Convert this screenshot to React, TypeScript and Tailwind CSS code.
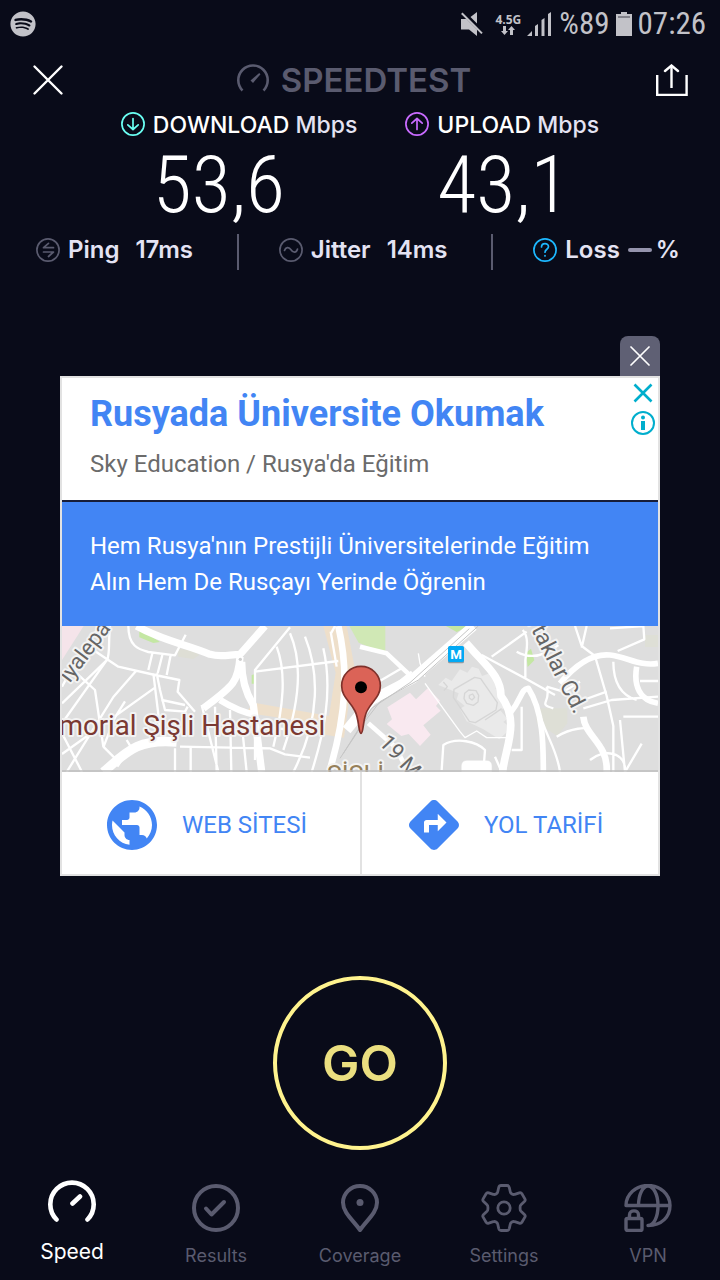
import type { ReactNode } from "react";
import { FaSpotify } from "react-icons/fa";
import { MdDirections, MdPublic } from "react-icons/md";

const condensed =
  "font-['Roboto_Condensed','Liberation_Sans_Narrow','Roboto',sans-serif]";

function StatusBar() {
  return (
    <div className="flex h-12 items-center justify-between pr-3.5 pl-2.5 text-[#c2c2c8]">
      <FaSpotify className="size-[26px]" aria-label="Spotify" />
      <div className="flex items-center gap-1.5">
        <svg viewBox="0 0 22 24" className="h-6 w-[22px]" fill="currentColor" aria-hidden="true">
          <path d="M9.500 5 16 0v11.500zM0 7h5.500L16 17.500V24l-8-6.500H0z" />
          <path d="M2.300 0 22 19.700" stroke="#090b19" strokeWidth="1.200" />
          <path d="M.8 1.200 21 21.400" stroke="currentColor" strokeWidth="2" />
        </svg>
        <div className="flex flex-col items-center pl-1.5 font-['Open_Sans',sans-serif] text-[12px] leading-3 font-bold">
          <span>4.5G</span>
          <svg viewBox="0 0 14 9" className="h-[9px] w-3.5" fill="currentColor" aria-hidden="true">
            <path d="M2 0h3v5h2L3.500 9 0 5h2zM9 9h3V4h2l-3.500-4L7 4h2z" />
          </svg>
        </div>
        <svg viewBox="0 0 24 24" className="size-6" fill="currentColor" aria-hidden="true">
          <path d="M0 24 5 19v5zM8 14l3-2v12H8zM14.500 8l3-2v18h-3zM21 2l3-2v24h-3z" />
        </svg>
        <span className={`${condensed} pl-0.5 text-[31px] leading-8`}>%89</span>
        <svg viewBox="0 0 16 24" className="h-6 w-4" aria-hidden="true">
          <path d="M5 0h6v2h5v22H0V2h5z" fill="currentColor" />
          <path d="M2 5h12" stroke="#6b6b76" strokeWidth="1.500" />
        </svg>
        <span className={`${condensed} text-[31px] leading-8`}>07:26</span>
      </div>
    </div>
  );
}

function Header() {
  return (
    <header className="flex h-16 items-center justify-between px-8">
      <button type="button" aria-label="Close" className="size-8">
        <svg viewBox="0 0 32 32" className="size-8" fill="none" stroke="#fff" strokeWidth="2.400" strokeLinecap="round">
          <path d="m2.500 2.500 27 27M29.500 2.500l-27 27" />
        </svg>
      </button>
      <div className="flex items-center gap-3 pr-3 text-[#5a5b6f]">
        <svg viewBox="0 0 32 32" className="size-8" fill="none" stroke="currentColor" aria-hidden="true">
          <path d="M5.500 26.500A14.700 14.700 0 1 1 26.500 26.500" strokeWidth="2.600" />
          <path d="m13.500 16.500 8.700-7.500 1.300 1.300-7.500 8.700z" fill="currentColor" stroke="none" />
        </svg>
        <span className="font-['Inter',sans-serif] text-[33px] leading-8 font-semibold">SPEEDTEST</span>
      </div>
      <button type="button" aria-label="Share" className="size-8">
        <svg viewBox="0 0 32 32" className="size-8" fill="none" stroke="#fff" strokeWidth="2.400">
          <path d="M1.200 11v20h29.400V11M15.500 24V1.500" />
          <path d="m9 7 6.500-5.500L22 7" strokeLinecap="round" />
        </svg>
      </button>
    </header>
  );
}

function Ring({ className, children }: { className: string; children: ReactNode }) {
  return (
    <svg viewBox="0 0 24 24" className={`size-6 shrink-0 ${className}`} fill="none" stroke="currentColor" strokeWidth="1.700" strokeLinecap="round" strokeLinejoin="round" aria-hidden="true">
      <circle cx="12" cy="12" r="11.100" />
      {children}
    </svg>
  );
}

function Throughput({ icon, label, value }: { icon: ReactNode; label: string; value: string }) {
  return (
    <div className="flex gap-2">
      {icon}
      <div>
        <p className="text-[23px] leading-[26px] font-medium text-white">
          {label} <span className="text-[#e4e3f3]">Mbps</span>
        </p>
        <p className={`${condensed} text-[80px] leading-[94px] font-light text-white`}>{value}</p>
      </div>
    </div>
  );
}

function Metric({ icon, label, children }: { icon: ReactNode; label: string; children: ReactNode }) {
  return (
    <div className="flex items-center gap-2 pr-1 pb-1 last:pr-0">
      {icon}
      <span>{label}</span>
      <span className="flex items-center">{children}</span>
    </div>
  );
}

function Results() {
  return (
    <section className="font-['Inter',sans-serif]">
      <div className="flex justify-center gap-12">
        <Throughput
          label="DOWNLOAD"
          value="53,6"
          icon={<Ring className="text-[#6afff3]"><path d="M12 6.500v11M6.800 12.800l5.200 4.700 5.200-4.700" /></Ring>}
        />
        <Throughput
          label="UPLOAD"
          value="43,1"
          icon={<Ring className="text-[#c96bff]"><path d="M12 17.500v-11M6.800 11.200 12 6.500l5.200 4.700" /></Ring>}
        />
      </div>
      <div className="mt-0.5 flex h-9 items-center justify-between pr-10 pl-9 text-[24px] font-semibold text-[#e4e3f3]">
        <Metric
          label="Ping"
          icon={<Ring className="text-[#5a5b6f]"><path d="M17.500 9.700H7.500L12.500 5.300M7.500 14h10l-5 4.500" /></Ring>}
        >
          <span className="pl-2">17ms</span>
        </Metric>
        <span className="h-9 w-0.5 bg-[#5a5b6f]" />
        <Metric
          label="Jitter"
          icon={<Ring className="text-[#5a5b6f]"><path d="M5.500 12.500c1-3.500 4.500-4 6.500-.8s5.500 3.400 6.500-.7" /></Ring>}
        >
          <span className="pl-2">14ms</span>
        </Metric>
        <span className="h-9 w-0.5 bg-[#5a5b6f]" />
        <Metric
          label="Loss"
          icon={<Ring className="text-[#1db8ff]"><path d="M8.500 9c0-4.500 7-4.500 7-.3 0 2.500-3.500 2.600-3.500 5.500M12 17.500v.4" /></Ring>}
        >
          <span className="mr-1 h-1 w-6 rounded-full bg-[#9594ad]" />%
        </Metric>
      </div>
    </section>
  );
}

function CityMap() {
  return (
    <svg viewBox="6 18 1788 438" preserveAspectRatio="xMidYMid slice" className="block h-[146px] w-full bg-[#dedede]" role="img" aria-label="Şişli">
      <rect x="6" y="18" width="1788" height="438" fill="#dedede" />
      <path d="M6 18h65L6 120z" fill="#f5e4ea" />
      <path d="M238 25 300 66l-20 3-42-17z" fill="#c4e7a3" />
      <path d="m350 85 50 8 18 12-18 12-45-7z" fill="#deded5" />
      <path d="M790 18h70l22 115-30 220-95-15 5-30-205-30 25-30 225 40 20-130z" fill="#eedfca" />
      <path d="M868 18h108v82l-80-32z" fill="#d0e8b5" />
      <path d="M1158 18h70l-38 18z" fill="#c4e7a3" />
      <path d="m575 165 8-2v28h-8zM1398 98l15-12 10 35-20 20z" fill="#c4e7a3" />
      <path d="m982 262 68-44 18 20 36-34 36 38-12 16 14 14-52 44 22 28-32 34-34-36-22 6-44-36 16-14z" fill="#f9e9f0" />
      <path d="M1430 265h92v45l-30 38-62-40zM1755 45h39v36h-39z" fill="#dedfd6" />
      <path d="m1135 195 22-22 18 10 25-35 22 10 14-18 20 6 10 22 28-10 22 34-10 14 14 4 18 52-18 8 22 26-12 10 24 18-36 34-48-30-50-24-20-38 14-8-24-20 6-18z" fill="#eaeaea" />
      <g fill="none" stroke="#d6d6d6" strokeWidth="4" strokeLinejoin="round">
        <path d="m1182 208 62-36 18 4 50 72-4 22-62 38-18-4-48-72z" />
        <path d="m1214 220 12-10 22 2 8 14-2 20-14 10-20-6-8-14zM1228 226l10-4 6 10-8 8-8-6z" />
        <path d="m1275 300 50-34M1150 186l12 14-10 12" />
      </g>
      <g fill="none" stroke="#fff" strokeLinejoin="round">
        <g strokeWidth="7">
          <path d="M150 18c-5 50 0 80-8 100L6 310M6 402l280-200M100 90l75 50 110 25 73 15-5 35 52 60M205 18c0 60 30 70 60 78l80 10 32-62M265 150l12-50M293 160l14-55M320 165l12-60M280 160l22 180M290 160l10 50 15 60 60 5 8-15M50 160l55 50 25 170 48 48M6 250l140-135M120 18 60 100 6 200M20 456l140-225 70-80M6 340l60 116M200 360l12 20-40 60M130 382l35-90 30-48" />
          <path d="M345 385v71M392 380v76M425 255l50 200M465 260l5 196M510 270l4 186M545 310l15 146M360 380l270 5 45 18 75 10M690 22 585 150v270M585 155l250-32M650 80c30 80 20 180-10 300M690 40c35 80 35 190-20 350M735 50c40 100 50 240-35 406M790 85c30 130 0 260-35 371M600 320l100 10M305 240l70 15" />
          <path d="M812 35 830 140M825 18l-12 22" />
          <path d="M930 200l95-55M925 260l130-105M1145 450l5-75c40-25 100-10 125 15l-5 65M1265 105l130 70 90 50M1295 110l105-75M1388 30c20 20 12 60 8 90v55M1370 95c35 20 75 20 125-20M1460 200c15 50-30 50 20 65M1460 200l50 15 50-30M1570 240l70-25" />
          <path d="m1545 18 20 60 40 30 35 120 20 90v138M1580 18l-15 65M1660 125c0 60 20 100 70 115M1570 265l85-25 139-10M1690 290h104M1430 250c20 90 60 130 70 206M1490 350c50-30 90-25 90-25M1680 300l15 156 50-85M1590 420c40-35 110-25 105 36M1355 390h30V260M1305 410l20 46M1650 25l100-7 3 40-80 35M1740 183h54" />
        </g>
        <path d="M1075 100l5 30 15 40M1095 190 1200 335l15 18 35-20 30 20h60" strokeWidth="4" />
        <path d="M230 18c80 45 150 55 220 85 35 10 60 0 90 0l75-85M540 110c-5 80-25 90-110 155M545 125c0 50 10 90 35 130l25 200" strokeWidth="22" />
        <path d="M130 456c70-60 100-100 220-90" strokeWidth="28" />
        <path d="M480 240c40 25 80 40 110 45M835 18c30 130 25 260-25 430" strokeWidth="20" />
        <path d="M860 330 935 240 1060 175 1240 18" strokeWidth="30" />
        <path d="m900 80 80 20 80 75M925 310l80 70 40 76" strokeWidth="14" />
        <path d="M1218 68c60 70 105 100 105 160 60 80 10 160 5 228" strokeWidth="23" />
        <path d="M1350 280c40-50 30-70 55-75 45 70 45 170 45 251M1500 190c50-60 100-90 150-85s90 35 144 25M1730 140c-10 60 10 100 64 110" strokeWidth="17" />
        <path d="M1570 290c5 60 75 80 70 166" strokeWidth="20" />
        <path d="M1205 456v-18q0-16 16-16h58q16 0 16 16v18z" fill="#fff" />
      </g>
      <path d="M1255 18 1075 180 960 245 910 310 840 415M1228 26 1050 188 935 265 850 400" fill="none" stroke="#c5c5c5" strokeWidth="3" />
      <circle cx="541" cy="118" r="5" fill="#cfcfcf" />
      <g className="font-['Roboto',sans-serif]" stroke="#f3f3f3" strokeWidth="12" strokeLinejoin="round" paintOrder="stroke">
        <text x="-14" y="180" fontSize="66" fill="#666" transform="rotate(-53 18 142)">iyalepa</text>
        <text x="-4" y="344" fontSize="83" fill="#7b3932">morial Şişli Hastanesi</text>
        <text x="800" y="492" fontSize="76" fill="#96805a">ŞİŞLİ</text>
        <text x="954" y="370" fontSize="66" fill="#666" transform="rotate(47 954 370)">19 Mayıs</text>
        <text x="1402" y="6" fontSize="68" fill="#666" transform="rotate(63 1402 6)">rtaklar Cd.</text>
      </g>
      <rect x="1164" y="80" width="48" height="50" rx="5" fill="#8c9aa3" />
      <rect x="1164" y="78" width="48" height="48" rx="5" fill="#03a9f4" />
      <text x="1188" y="117" textAnchor="middle" fontSize="40" fill="#fff" className="font-['Roboto',sans-serif] font-bold">M</text>
      <path d="M903 340c-8 0-5-42-18-67-15-30-40-42-40-76a58 58 0 0 1 116 0c0 34-25 46-40 76-13 25-10 67-18 67z" fill="#db6357" stroke="#7f312b" strokeWidth="5" />
      <circle cx="903" cy="202" r="18" />
      <path d="M6 453h1788" stroke="#bdbdbd" strokeWidth="5" />
    </svg>
  );
}

function AdCard() {
  return (
    <section className="mt-[66px] px-15 font-['Roboto',sans-serif]">
      <div className="flex justify-end">
        <button type="button" aria-label="Dismiss" className="flex size-10 items-center justify-center rounded-t-lg bg-[#5f6074]">
          <svg viewBox="0 0 20 20" className="size-5" fill="none" stroke="#fff" strokeWidth="1.700" strokeLinecap="round">
            <path d="m1 1 18 18M19 1 1 19" />
          </svg>
        </button>
      </div>
      <article className="border-2 border-[#e2e2e2] bg-white">
        <div className="flex justify-between border-b-2 border-[#171d38] pl-7">
          <div className="pt-3.5 pb-5">
            <h2 className="text-[36px] leading-11 font-bold text-[#4285f4]">Rusyada Üniversite Okumak</h2>
            <p className="mt-3 text-[24px] leading-8 text-[#6b6b6b]">Sky Education / Rusya'da Eğitim</p>
          </div>
          <div className="flex flex-col items-center gap-1.5 pt-[3px] pr-[3px] text-[#00aecd]">
            <button type="button" aria-label="Close ad" className="size-6">
              <svg viewBox="0 0 24 24" className="size-6" fill="none" stroke="currentColor" strokeWidth="2.600">
                <path d="m3.500 3.500 17 17M20.500 3.500l-17 17" />
              </svg>
            </button>
            <button type="button" aria-label="About this ad" className="size-6">
              <svg viewBox="0 0 24 24" className="size-6" fill="none" stroke="currentColor" strokeWidth="2">
                <circle cx="12" cy="12" r="11" />
                <circle cx="12" cy="6.500" r="2" fill="currentColor" stroke="none" />
                <path d="M12 10v9" strokeWidth="4" />
              </svg>
            </button>
          </div>
        </div>
        <p className="bg-[#4285f4] px-7 py-[26px] text-[24px] leading-9 text-white">
          Hem Rusya'nın Prestijli Üniversitelerinde Eğitim Alın Hem De Rusçayı Yerinde Öğrenin
        </p>
        <CityMap />
        <div className="grid grid-cols-2 text-[24px] text-[#4285f4]">
          <a href="#web" className="flex h-[102px] items-center gap-5 pt-1 pl-10">
            <MdPublic className="size-15 shrink-0" />
            <span>WEB SİTESİ</span>
          </a>
          <a href="#directions" className="flex h-[102px] items-center gap-5 border-l-2 border-[#e2e2e2] pt-1 pl-10.5">
            <MdDirections className="size-15 shrink-0" />
            <span>YOL TARİFİ</span>
          </a>
        </div>
      </article>
    </section>
  );
}

const tabs: { label: string; icon: ReactNode }[] = [
  {
    label: "Results",
    icon: (
      <>
        <circle cx="24" cy="24" r="22" />
        <path d="m14 24.500 5.500 6L32 18" />
      </>
    ),
  },
  {
    label: "Coverage",
    icon: (
      <>
        <path d="M24 46C17 36 7 28.500 7 18.500a17 16.500 0 0 1 34 0C41 28.500 31 36 24 46z" />
        <circle cx="24" cy="18.500" r="3.500" fill="currentColor" stroke="none" />
      </>
    ),
  },
  {
    label: "Settings",
    icon: (
      <g strokeWidth="2.800">
        <path d="M21 1.500h6c1.500 0 2 .8 2.300 2l1 4.500c.2 1 .8 1.500 1.700 2s1.700.7 2.700.3l4.600-1.500c1.100-.3 2-.1 2.600.9l3 5.200c.6 1 .3 1.900-.5 2.700L41 20.800c-.7.7-.9 1.300-.9 2.200v2c0 .9.200 1.500.9 2.200l3.400 3.200c.8.800 1.100 1.700.5 2.700l-3 5.200c-.6 1-1.500 1.200-2.600.9l-4.600-1.500c-1-.4-1.800-.2-2.700.3s-1.500 1-1.700 2l-1 4.500c-.3 1.200-.8 2-2.300 2h-6c-1.500 0-2-.8-2.300-2l-1-4.500c-.2-1-.8-1.500-1.700-2s-1.700-.7-2.700-.3l-4.600 1.500c-1.100.3-2 .1-2.600-.9l-3-5.200c-.6-1-.3-1.900.5-2.700L7 27.200c.7-.7.9-1.300.9-2.200v-2c0-.9-.2-1.500-.9-2.200l-3.400-3.200c-.8-.8-1.100-1.700-.5-2.700l3-5.200c.6-1 1.500-1.200 2.600-.9l4.600 1.500c1 .4 1.800.2 2.700-.3s1.500-1 1.700-2l1-4.500c.3-1.200.8-2 2.300-2z" />
        <circle cx="24" cy="24" r="6.200" />
      </g>
    ),
  },
  {
    label: "VPN",
    icon: (
      <g strokeWidth="3.400">
        <path d="M2 21.500a22 20 0 0 1 44 0c0 11-8 20-22 20M2 21.500h44M14.500 21.500C14.500 10 19 2 24 2s10 8 10 19.500-4 20-10 20" />
        <rect x="2" y="34.500" width="16" height="12" rx="1.500" />
        <path d="M5.500 34v-3c0-5.500 9-5.500 9 0v3" />
      </g>
    ),
  },
];

function TabBar() {
  return (
    <nav className="mt-auto grid h-[104px] grid-cols-5 font-['Inter',sans-serif] text-[18px] leading-5 text-[#5a5b6f]">
      <button type="button" aria-current="page" className="flex flex-col items-center gap-3 pt-1 text-[21px] leading-6 text-white">
        <svg viewBox="0 0 48 48" className="size-12" fill="none" stroke="currentColor" strokeWidth="4.600" strokeLinecap="round" aria-hidden="true">
          <path d="M8.500 39.500A21.700 21.700 0 1 1 39.500 39.500M24.500 23.500l7.500-7" />
        </svg>
        Speed
      </button>
      {tabs.map((tab) => (
        <button key={tab.label} type="button" className="flex flex-col items-center gap-3.5 pt-2">
          <svg viewBox="0 0 48 48" className="size-12" fill="none" stroke="currentColor" strokeWidth="4" strokeLinecap="round" strokeLinejoin="round" aria-hidden="true">
            {tab.icon}
          </svg>
          {tab.label}
        </button>
      ))}
    </nav>
  );
}

export default function App() {
  return (
    <div className="flex min-h-screen flex-col bg-[#090b19]">
      <StatusBar />
      <Header />
      <Results />
      <AdCard />
      <button
        type="button"
        className="mx-auto mt-25 size-[174px] shrink-0 rounded-full border-4 border-[#fff38e] font-['Inter',sans-serif] text-[50px] font-semibold text-[#ebdf80]"
      >
        GO
      </button>
      <TabBar />
    </div>
  );
}
